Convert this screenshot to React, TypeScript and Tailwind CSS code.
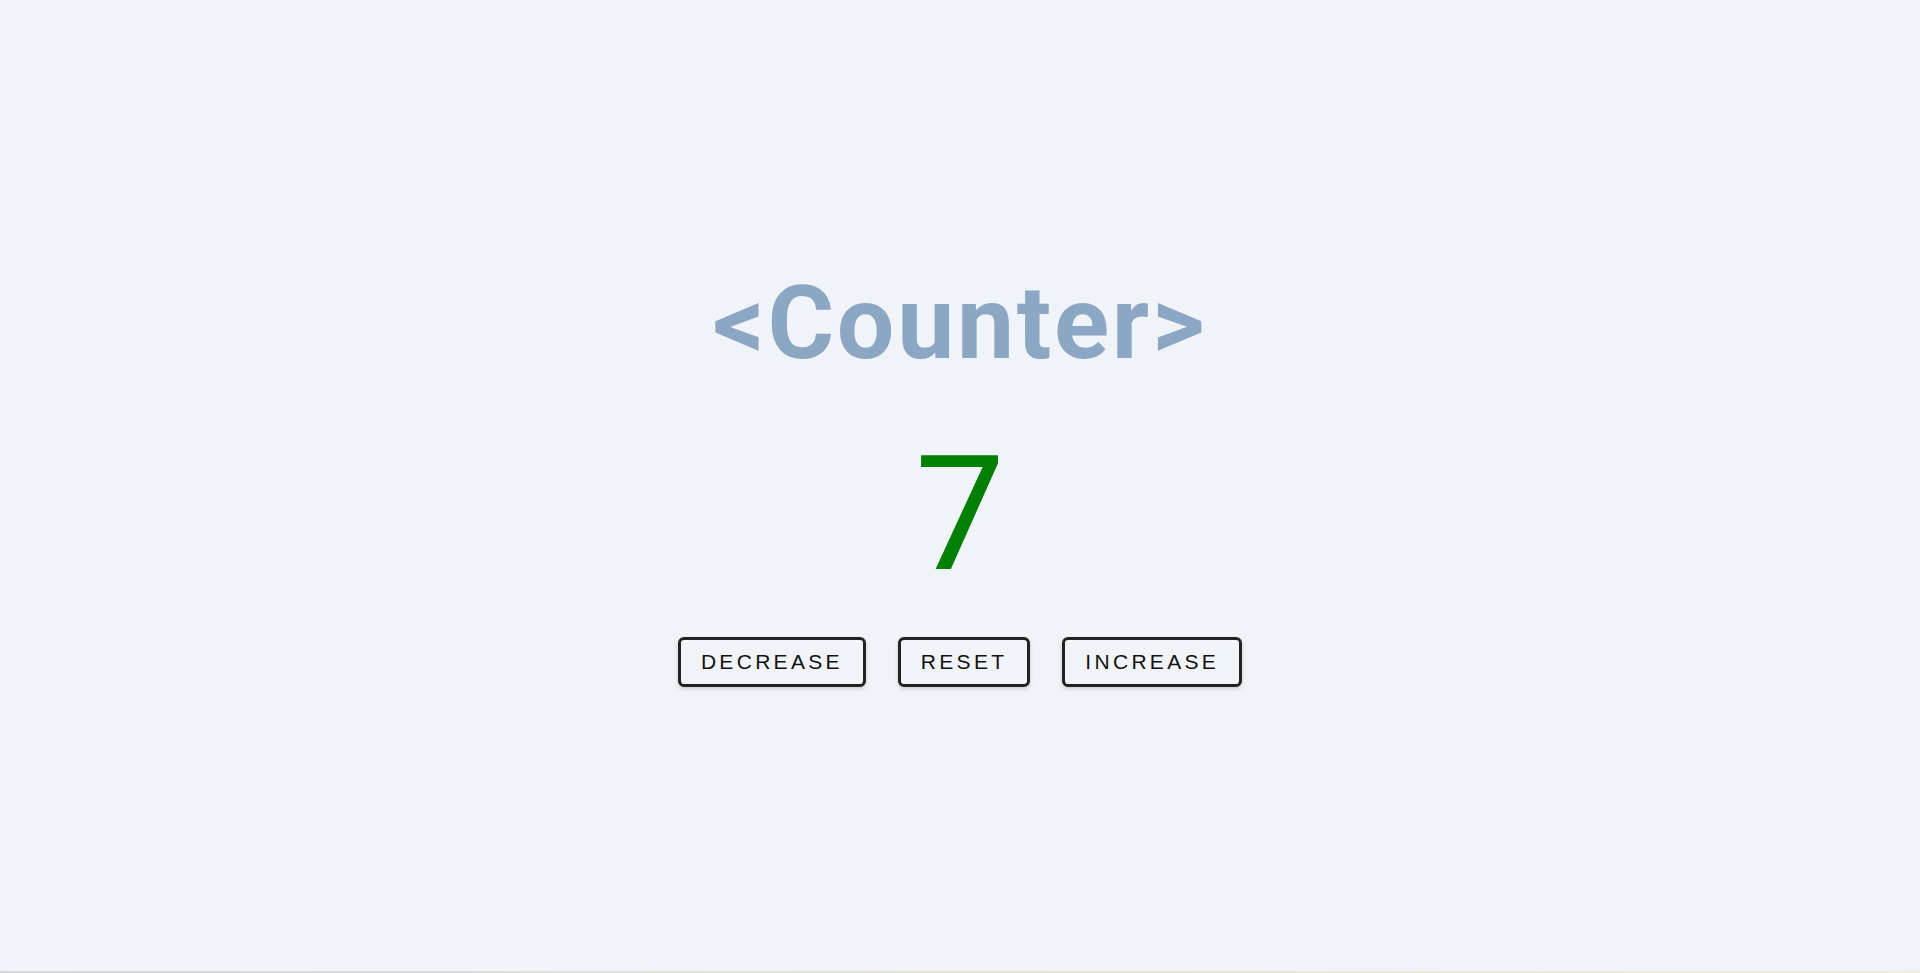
import React, { useState } from "react";

export default function App() {
  const [count, setCount] = useState(7);
  const color = count > 0 ? "text-[#008000]" : count < 0 ? "text-[#ff0000]" : "text-[#222222]";
  const btn =
    "bg-[#f0f4f8] border-[3px] border-[#222222] rounded-[6px] px-[20px] py-[10px] font-['Liberation_Sans',Arial,sans-serif] text-[21px] leading-[24px] tracking-[3.3px] text-[#111111] shadow-[0_2px_4px_rgba(0,0,0,0.15)] uppercase cursor-pointer";
  return (
    <div className="h-[973px] flex flex-col bg-[#f0f4f8]">
      <div className="h-[971px] flex flex-col items-center justify-center pb-[12px] font-['Roboto',sans-serif]">
        <h1 className="font-bold text-[102px] leading-none tracking-[2.7px] text-[#8ba7c4]">
          &lt;Counter&gt;
        </h1>
        <div className={`mt-[61px] text-[160px] leading-none ${color}`}>{count}</div>
        <div className="mt-[42px] flex gap-[32px]">
          <button className={btn} onClick={() => setCount(count - 1)}>
            Decrease
          </button>
          <button className={btn} onClick={() => setCount(0)}>
            Reset
          </button>
          <button className={btn} onClick={() => setCount(count + 1)}>
            Increase
          </button>
        </div>
      </div>
      <div className="h-[2px] bg-gradient-to-r from-[#d6d6d6] via-[#e6e2d6] to-[#f3ecd6]" />
    </div>
  );
}
